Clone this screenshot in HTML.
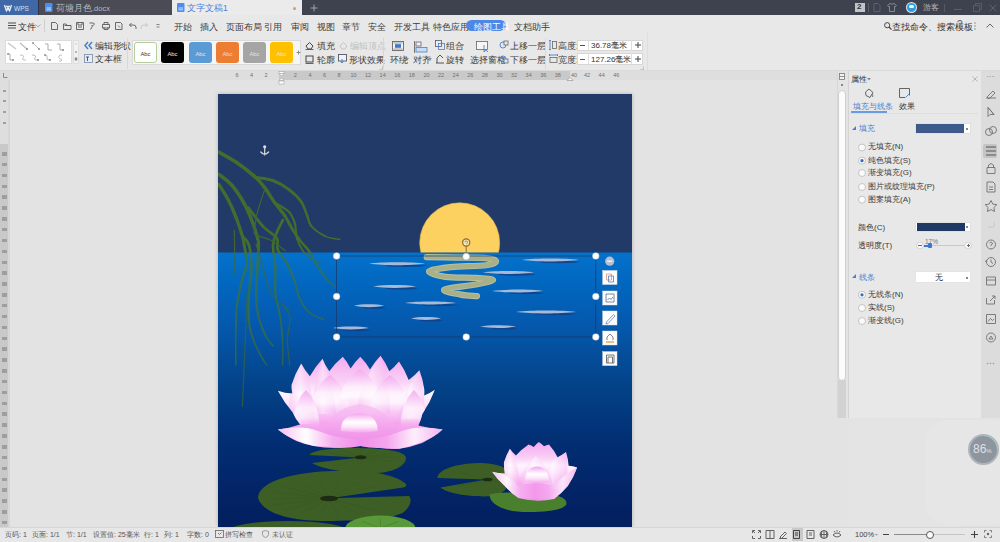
<!DOCTYPE html>
<html><head><meta charset="utf-8">
<style>
*{box-sizing:border-box;margin:0;padding:0}
html,body{width:1000px;height:542px;overflow:hidden;background:#e3e3e3;font-family:"Liberation Sans",sans-serif;font-size:8.5px;color:#333}
.a{position:absolute}
.t{position:absolute;white-space:nowrap;line-height:10px;font-size:8.5px;color:#3c3c3c}
svg{overflow:visible}
#title{left:0;top:0;width:1000px;height:15px;background:#3e424e}
#menu{left:0;top:15px;width:1000px;height:56px;background:#e8e8e8}
#ruler{left:0;top:71px;width:838px;height:9px;background:#dedede}
#vruler{left:0;top:80px;width:10px;height:447px;background:#dedede}
#status{left:0;top:527px;width:1000px;height:15px;background:#e7e7e7;border-top:1px solid #d6d6d6}
#panel{left:848px;top:71px;width:133px;height:456px;background:#e8e8e8;border-left:1px solid #d4d4d4}
#side{left:981px;top:71px;width:19px;height:456px;background:#dcdcdc}
#page{left:218px;top:94px;width:414px;height:433px;overflow:hidden;box-shadow:0 0 4px rgba(0,0,0,.22)}
.ic{position:absolute;overflow:visible}
.sep{position:absolute;width:1px;background:#d2d2d2}
</style></head><body>
<!-- TITLE BAR -->
<div id="title" class="a"></div>
<div class="a" style="left:0;top:0;width:38px;height:15px;background:#4067a6"></div>
<div class="a" style="left:38px;top:0;width:1px;height:15px;background:#2f3240"></div>
<div class="a" style="left:39px;top:0;width:133px;height:15px;background:#4a4b55"></div>
<svg class="ic" style="left:4px;top:4px" width="8" height="8" viewBox="0 0 8 8"><path d="M0.5,1 L2.5,7 L4,3.5 L5.5,7 L7.5,1 M2,2.5 h4" fill="none" stroke="#e4e9f2" stroke-width="1.4" stroke-linejoin="round"/></svg>
<div class="t" style="left:14px;top:3.5px;color:#d9e0ec;font-size:6.5px">WPS</div>
<svg class="ic" style="left:45px;top:3px" width="8" height="9" viewBox="0 0 8 9"><rect x="0" y="0" width="7.5" height="9" rx="1" fill="#4a8ef2"/><path d="M1.5,5 h4.5 M1.5,6.8 h4.5" stroke="#dbe8ff" stroke-width="0.9"/></svg>
<div class="t" style="left:56px;top:3px;color:#b8b9bf;font-size:8.5px">荷塘月色<span style="font-size:7.5px">.docx</span></div>
<div class="a" style="left:172px;top:0;width:130px;height:16px;background:#ebebeb"></div>
<svg class="ic" style="left:177px;top:3px" width="8" height="9" viewBox="0 0 8 9"><rect x="0" y="0" width="7.5" height="9" rx="1" fill="#4a8ef2"/><path d="M1.5,5 h4.5 M1.5,6.8 h4.5" stroke="#dbe8ff" stroke-width="0.9"/></svg>
<div class="t" style="left:187px;top:3px;color:#4a7fd6;font-size:8.5px">文字文稿1</div>
<div class="a" style="left:292.5px;top:6.5px;width:3.5px;height:3.5px;border-radius:2px;background:#d9956e"></div>
<div class="a" style="left:302px;top:0;width:19px;height:15px;background:#3f434f"></div>
<svg class="ic" style="left:310px;top:4px" width="8" height="8" viewBox="0 0 8 8"><path d="M4,0.5 v7 M0.5,4 h7" stroke="#a0a3ab" stroke-width="1"/></svg>
<!-- right side of title -->
<div class="a" style="left:855px;top:3px;width:10px;height:9px;background:#c4c4c8"></div>
<div class="t" style="left:857px;top:2px;color:#333;font-size:8px;font-weight:bold">2</div>
<div class="a" style="left:868px;top:3px;width:1px;height:9px;background:#5a5d68"></div>
<svg class="ic" style="left:873px;top:3px" width="8" height="9" viewBox="0 0 8 9"><path d="M1,0.5 h4 l2,2 v6 h-6z" fill="none" stroke="#5d606b" stroke-width="1"/></svg>
<svg class="ic" style="left:887px;top:3px" width="10" height="9" viewBox="0 0 10 9"><path d="M3,0.5 L0.5,2.5 L2,4 L2.5,3.5 V8.5 H7.5 V3.5 L8,4 L9.5,2.5 L7,0.5 Q5,2 3,0.5z" fill="none" stroke="#8d9099" stroke-width="0.9"/></svg>
<div class="a" style="left:906px;top:2px;width:11px;height:11px;border-radius:6px;background:#dfe6f0"></div>
<div class="a" style="left:907px;top:3px;width:9px;height:9px;border-radius:5px;background:#2f9be6"></div>
<div class="a" style="left:909px;top:5px;width:5px;height:3px;border-radius:2px;background:#fff"></div>
<div class="t" style="left:923px;top:3px;color:#b5b7bd;font-size:8px">游客</div>
<div class="a" style="left:944px;top:4px;width:1px;height:8px;background:#555966"></div>
<div class="a" style="left:954px;top:9px;width:8px;height:1px;background:#5d606b"></div>
<svg class="ic" style="left:973px;top:3px" width="9" height="9" viewBox="0 0 9 9"><path d="M0.5,2.5 h6 v6 h-6z M2.5,2.5 v-2 h6 v6 h-2" fill="none" stroke="#5d606b" stroke-width="0.9"/></svg>
<svg class="ic" style="left:989px;top:4px" width="8" height="8" viewBox="0 0 8 8"><path d="M0.5,0.5 L7.5,7.5 M7.5,0.5 L0.5,7.5" stroke="#5d606b" stroke-width="1"/></svg>
<!-- MENU ROW + RIBBON BG -->
<div id="menu" class="a"></div>
<svg class="ic" style="left:8px;top:22px" width="8" height="7" viewBox="0 0 8 7"><path d="M0,1 h8 M0,3.5 h8 M0,6 h8" stroke="#4a4a4a" stroke-width="1"/></svg>
<div class="t" style="left:18px;top:22px;color:#333">文件</div>
<svg class="ic" style="left:35px;top:24px" width="6" height="4" viewBox="0 0 6 4"><path d="M0.5,0.5 L3,3 L5.5,0.5" fill="none" stroke="#999" stroke-width="0.8"/></svg>
<div class="sep" style="left:44px;top:19px;height:13px;background:#d0d0d0"></div>
<g></g>
<svg class="ic" style="left:51px;top:22px" width="110" height="8" viewBox="0 0 110 8" fill="none" stroke="#5a5a5a" stroke-width="0.9">
<path d="M0.5,0.5 h4 l2,2 v5 h-6z"/>
<path d="M12.5,2 v5.5 h7.5 v-4 h-4 l-1,-1.5z M13.5,3.5 h6"/>
<path d="M25.5,0.5 h7 v7 h-7z M27,0.5 v2.5 h4 v-2.5 M27,5 h4"/>
<path d="M38.5,1 h4 l1,1 l-2,2 l-1,-1 M41.5,4 l-2,3.5"/>
<path d="M51.5,2.5 h7 v3.5 h-7z M53,2.5 v-2 h4 v2 M53,5 v2.5 h4 v-2.5"/>
<path d="M64.5,0.5 h5 l1.5,1.5 v5.5 h-6.5z M67,3.5 l2,2"/>
<path d="M78.5,3 l2,-2 M78.5,3 l2,2 M78.5,3 h4 q2.5,0 2.5,2.5 v1.5"/>
<path d="M96.5,3 l-2,-2 M96.5,3 l-2,2 M96.5,3 h-4 q-2.5,0 -2.5,2.5 v1.5" stroke="#c4c4c4"/>
<path d="M105.5,2.5 h3 M105.5,5 h3" stroke="#777"/>
</svg>
<div class="t" style="left:174px;top:22px">开始</div>
<div class="t" style="left:200px;top:22px">插入</div>
<div class="t" style="left:226px;top:22px">页面布局</div>
<div class="t" style="left:264px;top:22px">引用</div>
<div class="t" style="left:291px;top:22px">审阅</div>
<div class="t" style="left:317px;top:22px">视图</div>
<div class="t" style="left:342px;top:22px">章节</div>
<div class="t" style="left:368px;top:22px">安全</div>
<div class="t" style="left:394px;top:22px">开发工具</div>
<div class="t" style="left:433px;top:22px">特色应用</div>
<div class="a" style="left:466px;top:20px;width:40px;height:11px;border-radius:6px;background:#4d88e6"></div>
<div class="t" style="left:474px;top:22px;color:#fff">绘图工具</div>
<div class="t" style="left:514px;top:22px">文档助手</div>
<svg class="ic" style="left:884px;top:22px" width="8" height="8" viewBox="0 0 8 8"><circle cx="3.2" cy="3.2" r="2.6" fill="none" stroke="#444" stroke-width="1"/><path d="M5,5 L7.5,7.5" stroke="#444" stroke-width="1.1"/></svg>
<div class="t" style="left:892px;top:22px;color:#333">查找命令、搜索模板</div>
<div class="t" style="left:957px;top:20px;color:#666;font-size:10px">?</div>
<svg class="ic" style="left:974px;top:22px" width="2" height="8" viewBox="0 0 2 8"><circle cx="1" cy="1" r="0.7" fill="#777"/><circle cx="1" cy="4" r="0.7" fill="#777"/><circle cx="1" cy="7" r="0.7" fill="#777"/></svg>
<svg class="ic" style="left:986px;top:23px" width="8" height="5" viewBox="0 0 8 5"><path d="M0.5,4.5 L4,1 L7.5,4.5" fill="none" stroke="#666" stroke-width="1"/></svg>
<!-- RIBBON -->
<div class="a" style="left:5px;top:40px;width:67px;height:24px;background:#fff;border:1px solid #dcdcdc"></div>
<svg class="ic" style="left:5px;top:40px" width="67" height="24" viewBox="0 0 67 24" fill="none" stroke-width="0.8">
<path d="M3,3 L11,9" stroke="#c8c8c8" stroke-width="1.4"/>
<path d="M15,3 L22,9" stroke="#c0c0c0" stroke-width="1.4"/><circle cx="22" cy="9" r="1" fill="#8a8a8a" stroke="none"/>
<path d="M28,3 L34,9" stroke="#b0b0b0"/><circle cx="28" cy="3" r="0.9" fill="#8a8a8a" stroke="none"/><circle cx="34" cy="9" r="1" fill="#8a8a8a" stroke="none"/>
<path d="M40,4 h3 v6 h4" stroke="#9a9a9a"/>
<path d="M52,4 h3 v6 h3" stroke="#9a9a9a"/><circle cx="58" cy="10" r="1" fill="#8a8a8a" stroke="none"/>
<path d="M3,14 h2 v6 h3" stroke="#9a9a9a"/><circle cx="3" cy="14" r="0.9" fill="#8a8a8a" stroke="none"/><circle cx="8" cy="20" r="1" fill="#8a8a8a" stroke="none"/>
<path d="M15,15 q5,0 3,3 q-2,2 3,2" stroke="#b0b0b0"/>
<path d="M27,15 q5,0 3,3 q-2,2 3,2" stroke="#aaa"/><circle cx="33" cy="20" r="1" fill="#8a8a8a" stroke="none"/>
<path d="M40,15 q3,0 2,3 q-1,2 3,2" stroke="#aaa"/><circle cx="40" cy="15" r="0.9" fill="#8a8a8a" stroke="none"/><circle cx="45" cy="20" r="1" fill="#8a8a8a" stroke="none"/>
<path d="M57,15 q-4,0 -3,2.5 q1,2 3,2.5 q-1,2 -3,1" stroke="#aab"/>
</svg>
<div class="a" style="left:73px;top:40px;width:6px;height:24px;background:#f2f2f2;border:1px solid #dedede"></div>
<svg class="ic" style="left:73px;top:40px" width="6" height="24" viewBox="0 0 6 24"><path d="M3,3 v2" stroke="#bbb" stroke-width="0.8"/><circle cx="3" cy="12" r="0.8" fill="#666"/><path d="M1.5,19 h3 M3,17 v4" stroke="#555" stroke-width="0.8"/></svg>
<svg class="ic" style="left:84px;top:41px" width="9" height="9" viewBox="0 0 9 9"><path d="M4,1 L1,4.5 L4,8 M8,1 L5,4.5 L8,8" fill="none" stroke="#4a7fc8" stroke-width="1.5"/></svg>
<div class="t" style="left:95px;top:41px">编辑形状</div>
<svg class="ic" style="left:120px;top:44px" width="4" height="3" viewBox="0 0 4 3"><path d="M0,0 h4 l-2,2.5z" fill="#888"/></svg>
<svg class="ic" style="left:84px;top:54px" width="9" height="9" viewBox="0 0 9 9"><rect x="0.5" y="0.5" width="8" height="8" fill="#e4ecf7" stroke="#7a8ca8" stroke-width="0.8"/><path d="M2,3 h3 M3.5,3 v4" stroke="#445" stroke-width="0.9"/></svg>
<div class="t" style="left:95px;top:54px">文本框</div>
<svg class="ic" style="left:116px;top:57px" width="4" height="3" viewBox="0 0 4 3"><path d="M0,0 h4 l-2,2.5z" fill="#888"/></svg>
<div class="sep" style="left:127px;top:38px;height:31px;background:#d8d8d8"></div>
<!-- style gallery -->
<div class="a" style="left:132px;top:40px;width:169px;height:25px;background:#f6f6f6;border:1px solid #dadada"></div>
<div class="a" style="left:134px;top:42px;width:23px;height:21px;border-radius:3px;background:#fff;border:1px solid #b5cf9c"></div>
<div class="a" style="left:161px;top:42px;width:23px;height:21px;border-radius:3px;background:#000"></div>
<div class="a" style="left:189px;top:42px;width:23px;height:21px;border-radius:3px;background:#5b9bd5"></div>
<div class="a" style="left:216px;top:42px;width:23px;height:21px;border-radius:3px;background:#ed7d31"></div>
<div class="a" style="left:243px;top:42px;width:23px;height:21px;border-radius:3px;background:#a5a5a5"></div>
<div class="a" style="left:270px;top:42px;width:23px;height:21px;border-radius:3px;background:#ffc000"></div>
<div class="t" style="left:134px;top:49px;width:23px;text-align:center;font-size:5.8px;color:#333">Abc</div>
<div class="t" style="left:161px;top:49px;width:23px;text-align:center;font-size:5.8px;color:#eee">Abc</div>
<div class="t" style="left:189px;top:49px;width:23px;text-align:center;font-size:5.8px;color:#dbe9f7">Abc</div>
<div class="t" style="left:216px;top:49px;width:23px;text-align:center;font-size:5.8px;color:#fbd9c0">Abc</div>
<div class="t" style="left:243px;top:49px;width:23px;text-align:center;font-size:5.8px;color:#e4e4e4">Abc</div>
<div class="t" style="left:270px;top:49px;width:23px;text-align:center;font-size:5.8px;color:#ffe9a8">Abc</div>
<svg class="ic" style="left:296px;top:50px" width="5" height="5" viewBox="0 0 5 5"><path d="M2.5,0.5 v4 M0.5,2.5 h4" stroke="#777" stroke-width="0.8"/></svg>
<!-- fill / outline -->
<svg class="ic" style="left:305px;top:41px" width="9" height="9" viewBox="0 0 9 9"><path d="M1,5 L4.5,1.5 L8,5 L6,8 H3z" fill="none" stroke="#444" stroke-width="1"/><path d="M0.5,8.5 h8" stroke="#444" stroke-width="0.8"/></svg>
<div class="t" style="left:317px;top:41px">填充</div>
<svg class="ic" style="left:331px;top:44px" width="4" height="3" viewBox="0 0 4 3"><path d="M0,0 h4 l-2,2.5z" fill="#888"/></svg>
<svg class="ic" style="left:339px;top:41px" width="9" height="9" viewBox="0 0 9 9"><path d="M1,5 L4.5,1.5 L8,5 L6,8 H3z" fill="none" stroke="#c4c4c4" stroke-width="1"/></svg>
<div class="t" style="left:350px;top:41px;color:#c0c0c0">编辑顶点</div>
<svg class="ic" style="left:305px;top:55px" width="9" height="9" viewBox="0 0 9 9"><rect x="1" y="1" width="7" height="6" fill="none" stroke="#444" stroke-width="1"/><path d="M0.5,8.5 h8" stroke="#555" stroke-width="0.9"/></svg>
<div class="t" style="left:317px;top:55px">轮廓</div>
<svg class="ic" style="left:331px;top:58px" width="4" height="3" viewBox="0 0 4 3"><path d="M0,0 h4 l-2,2.5z" fill="#888"/></svg>
<svg class="ic" style="left:338px;top:54px" width="10" height="10" viewBox="0 0 10 10"><rect x="0.5" y="0.5" width="8" height="6.5" fill="#eef3fa" stroke="#556" stroke-width="0.9"/><path d="M4,5 v4 M2.5,7.5 l1.5,1.5 l1.5,-1.5" stroke="#4a7fc8" fill="none" stroke-width="0.9"/></svg>
<div class="t" style="left:349px;top:55px">形状效果</div>
<svg class="ic" style="left:376px;top:58px" width="4" height="3" viewBox="0 0 4 3"><path d="M0,0 h4 l-2,2.5z" fill="#888"/></svg>
<div class="sep" style="left:383px;top:38px;height:31px;background:#d6d6d6"></div>
<svg class="ic" style="left:379px;top:66px" width="4" height="4" viewBox="0 0 4 4"><path d="M0.5,3.5 h3 v-3" fill="none" stroke="#aaa" stroke-width="0.6"/></svg>
<!-- wrap / align / group -->
<svg class="ic" style="left:392px;top:41px" width="12" height="10" viewBox="0 0 12 10"><rect x="0.5" y="0.5" width="11" height="9" fill="#f4f4f4" stroke="#666" stroke-width="0.9"/><path d="M1.5,2 h9 M1.5,8 h9" stroke="#888" stroke-width="0.8"/><rect x="3" y="3.2" width="6" height="3.6" fill="#3f78c8"/></svg>
<div class="t" style="left:390px;top:55px">环绕</div>
<svg class="ic" style="left:405px;top:58px" width="4" height="3" viewBox="0 0 4 3"><path d="M0,0 h4 l-2,2.5z" fill="#888"/></svg>
<svg class="ic" style="left:414px;top:41px" width="14" height="12" viewBox="0 0 14 12"><path d="M0.5,0 v12" stroke="#666" stroke-width="0.9"/><rect x="2" y="1" width="5" height="4" fill="#eef" stroke="#666" stroke-width="0.8"/><rect x="2" y="6.5" width="11" height="4.5" fill="#c8dcf5" stroke="#4a7fc8" stroke-width="0.8"/></svg>
<div class="t" style="left:413px;top:55px">对齐</div>
<svg class="ic" style="left:428px;top:58px" width="4" height="3" viewBox="0 0 4 3"><path d="M0,0 h4 l-2,2.5z" fill="#888"/></svg>
<svg class="ic" style="left:435px;top:40px" width="10" height="10" viewBox="0 0 10 10"><rect x="0.5" y="0.5" width="6" height="6" fill="#e6eef9" stroke="#556" stroke-width="0.8"/><rect x="3.5" y="3.5" width="6" height="6" fill="none" stroke="#4a7fc8" stroke-width="0.8"/></svg>
<div class="t" style="left:446px;top:41px">组合</div>
<svg class="ic" style="left:460px;top:44px" width="4" height="3" viewBox="0 0 4 3"><path d="M0,0 h4 l-2,2.5z" fill="#888"/></svg>
<svg class="ic" style="left:435px;top:54px" width="10" height="10" viewBox="0 0 10 10"><path d="M1,9 h8 M2,9 v-5 l3,-3 l3,3" fill="none" stroke="#444" stroke-width="0.9"/></svg>
<div class="t" style="left:446px;top:55px">旋转</div>
<svg class="ic" style="left:460px;top:58px" width="4" height="3" viewBox="0 0 4 3"><path d="M0,0 h4 l-2,2.5z" fill="#888"/></svg>
<svg class="ic" style="left:476px;top:41px" width="13" height="12" viewBox="0 0 13 12"><rect x="0.5" y="0.5" width="11" height="8" fill="#f6f6f6" stroke="#666" stroke-width="0.8"/><path d="M8,4 v7 l2,-2 l2,2" fill="none" stroke="#4a7fc8" stroke-width="0.9"/></svg>
<div class="t" style="left:470px;top:55px">选择窗格</div>
<svg class="ic" style="left:499px;top:40px" width="10" height="10" viewBox="0 0 10 10"><circle cx="4" cy="5" r="3" fill="none" stroke="#4a7fc8" stroke-width="0.9"/><rect x="5" y="1" width="4" height="4" fill="#dde8f7" stroke="#556" stroke-width="0.7"/></svg>
<div class="t" style="left:510px;top:41px">上移一层</div>
<svg class="ic" style="left:537px;top:44px" width="4" height="3" viewBox="0 0 4 3"><path d="M0,0 h4 l-2,2.5z" fill="#888"/></svg>
<svg class="ic" style="left:499px;top:54px" width="10" height="10" viewBox="0 0 10 10"><circle cx="4" cy="5" r="3" fill="none" stroke="#4a7fc8" stroke-width="0.9"/><rect x="5" y="5" width="4" height="4" fill="#dde8f7" stroke="#556" stroke-width="0.7"/></svg>
<div class="t" style="left:510px;top:55px">下移一层</div>
<svg class="ic" style="left:537px;top:58px" width="4" height="3" viewBox="0 0 4 3"><path d="M0,0 h4 l-2,2.5z" fill="#888"/></svg>
<div class="sep" style="left:545px;top:38px;height:31px;background:#dadada"></div>
<!-- size -->
<svg class="ic" style="left:549px;top:40px" width="8" height="10" viewBox="0 0 8 10"><path d="M1,0.5 v9 M0,0.5 h2 M0,9.5 h2" stroke="#4a7fc8" stroke-width="0.9"/><rect x="3.5" y="1.5" width="4" height="7" fill="none" stroke="#666" stroke-width="0.8"/></svg>
<div class="t" style="left:558px;top:41px">高度:</div>
<div class="a" style="left:577px;top:40px;width:66px;height:11px;background:#fff;border:1px solid #d6d6d6"></div>
<div class="a" style="left:588px;top:40px;width:1px;height:11px;background:#dedede"></div>
<div class="a" style="left:631px;top:40px;width:1px;height:11px;background:#dedede"></div>
<div class="a" style="left:580px;top:45px;width:5px;height:1px;background:#555"></div>
<svg class="ic" style="left:635px;top:42px" width="6" height="6" viewBox="0 0 6 6"><path d="M3,0 v6 M0,3 h6" stroke="#444" stroke-width="1"/></svg>
<div class="t" style="left:591px;top:41px;font-size:8px;color:#333">36.78毫米</div>
<svg class="ic" style="left:549px;top:54px" width="9" height="9" viewBox="0 0 9 9"><path d="M0.5,1 h8 M0.5,0 v2 M8.5,0 v2" stroke="#4a7fc8" stroke-width="0.9"/><rect x="1" y="3.5" width="7" height="5" fill="none" stroke="#666" stroke-width="0.8"/></svg>
<div class="t" style="left:558px;top:55px">宽度:</div>
<div class="a" style="left:577px;top:53px;width:66px;height:12px;background:#fff;border:1px solid #d6d6d6"></div>
<div class="a" style="left:588px;top:53px;width:1px;height:12px;background:#dedede"></div>
<div class="a" style="left:631px;top:53px;width:1px;height:12px;background:#dedede"></div>
<div class="a" style="left:580px;top:59px;width:5px;height:1px;background:#555"></div>
<svg class="ic" style="left:635px;top:56px" width="6" height="6" viewBox="0 0 6 6"><path d="M3,0 v6 M0,3 h6" stroke="#444" stroke-width="1"/></svg>
<div class="t" style="left:591px;top:55px;font-size:8px;color:#333">127.26毫米</div>
<svg class="ic" style="left:640px;top:66px" width="4" height="4" viewBox="0 0 4 4"><path d="M0.5,3.5 h3 v-3" fill="none" stroke="#aaa" stroke-width="0.6"/></svg>
<div class="sep" style="left:647px;top:33px;height:37px;background:#dedede"></div>
<div class="a" style="left:0;top:70px;width:1000px;height:1px;background:#dadada"></div>
<!-- RULERS -->
<div id="ruler" class="a"></div>
<div class="a" style="left:279px;top:71px;width:291px;height:9px;background:#c9c9c9"></div>
<svg class="ic" style="left:3px;top:73px" width="5" height="5" viewBox="0 0 5 5"><path d="M0.5,0 v4.5 h4" fill="none" stroke="#777" stroke-width="0.8"/></svg>
<div class="t" style="left:235.4px;top:72px;font-size:5.5px;line-height:7px;color:#707070">6</div>
<div class="t" style="left:250.0px;top:72px;font-size:5.5px;line-height:7px;color:#707070">4</div>
<div class="t" style="left:264.6px;top:72px;font-size:5.5px;line-height:7px;color:#707070">2</div>
<div class="t" style="left:293.8px;top:72px;font-size:5.5px;line-height:7px;color:#707070">2</div>
<div class="t" style="left:308.4px;top:72px;font-size:5.5px;line-height:7px;color:#707070">4</div>
<div class="t" style="left:323.0px;top:72px;font-size:5.5px;line-height:7px;color:#707070">6</div>
<div class="t" style="left:337.6px;top:72px;font-size:5.5px;line-height:7px;color:#707070">8</div>
<div class="t" style="left:350.4px;top:72px;font-size:5.5px;line-height:7px;color:#707070">10</div>
<div class="t" style="left:365.0px;top:72px;font-size:5.5px;line-height:7px;color:#707070">12</div>
<div class="t" style="left:379.6px;top:72px;font-size:5.5px;line-height:7px;color:#707070">14</div>
<div class="t" style="left:394.2px;top:72px;font-size:5.5px;line-height:7px;color:#707070">16</div>
<div class="t" style="left:408.8px;top:72px;font-size:5.5px;line-height:7px;color:#707070">18</div>
<div class="t" style="left:423.4px;top:72px;font-size:5.5px;line-height:7px;color:#707070">20</div>
<div class="t" style="left:438.0px;top:72px;font-size:5.5px;line-height:7px;color:#707070">22</div>
<div class="t" style="left:452.6px;top:72px;font-size:5.5px;line-height:7px;color:#707070">24</div>
<div class="t" style="left:467.2px;top:72px;font-size:5.5px;line-height:7px;color:#707070">26</div>
<div class="t" style="left:481.8px;top:72px;font-size:5.5px;line-height:7px;color:#707070">28</div>
<div class="t" style="left:496.4px;top:72px;font-size:5.5px;line-height:7px;color:#707070">30</div>
<div class="t" style="left:511.0px;top:72px;font-size:5.5px;line-height:7px;color:#707070">32</div>
<div class="t" style="left:525.6px;top:72px;font-size:5.5px;line-height:7px;color:#707070">34</div>
<div class="t" style="left:540.2px;top:72px;font-size:5.5px;line-height:7px;color:#707070">36</div>
<div class="t" style="left:554.8px;top:72px;font-size:5.5px;line-height:7px;color:#707070">38</div>
<div class="t" style="left:584.0px;top:72px;font-size:5.5px;line-height:7px;color:#707070">42</div>
<div class="t" style="left:598.6px;top:72px;font-size:5.5px;line-height:7px;color:#707070">44</div>
<div class="t" style="left:613.2px;top:72px;font-size:5.5px;line-height:7px;color:#707070">46</div>
<svg class="ic" style="left:278px;top:71px" width="7" height="14" viewBox="0 0 7 14"><rect x="1" y="0.5" width="5" height="2" fill="#fff" stroke="#999" stroke-width="0.5"/><path d="M1,2.5 h5 l-2.5,2.5z" fill="#fff" stroke="#999" stroke-width="0.5"/><path d="M1,9.5 l2.5,-2.5 l2.5,2.5z" fill="#fff" stroke="#999" stroke-width="0.5"/><rect x="1" y="10" width="5" height="3" fill="#fff" stroke="#999" stroke-width="0.5"/></svg>
<svg class="ic" style="left:566px;top:75px" width="8" height="6" viewBox="0 0 8 6"><path d="M1,5.5 l3,-3 l3,3z" fill="#fff" stroke="#888" stroke-width="0.6"/></svg>
<div class="t" style="left:571px;top:72px;font-size:5.5px;line-height:7px;color:#707070">40</div>
<div id="vruler" class="a"></div>
<div class="a" style="left:0;top:144px;width:8px;height:383px;background:#c9c9c9"></div>
<div class="a" style="left:8px;top:80px;width:2px;height:447px;background:#d6d6d6"></div>
<div class="a" style="left:3px;top:90px;width:3px;height:1.5px;background:#a0a0a0"></div>
<div class="a" style="left:3px;top:100px;width:3px;height:1.5px;background:#a0a0a0"></div>
<div class="a" style="left:3px;top:111px;width:3px;height:1.5px;background:#a0a0a0"></div>
<div class="a" style="left:3px;top:122px;width:3px;height:1.5px;background:#a0a0a0"></div>
<div class="a" style="left:2px;top:152.0px;width:4.5px;height:3.6px;background:#8f8f8f;opacity:.75"></div>
<div class="a" style="left:2px;top:162.8px;width:4.5px;height:3.6px;background:#8f8f8f;opacity:.75"></div>
<div class="a" style="left:2px;top:173.7px;width:4.5px;height:3.6px;background:#8f8f8f;opacity:.75"></div>
<div class="a" style="left:2px;top:184.5px;width:4.5px;height:3.6px;background:#8f8f8f;opacity:.75"></div>
<div class="a" style="left:2px;top:195.4px;width:4.5px;height:3.6px;background:#8f8f8f;opacity:.75"></div>
<div class="a" style="left:2px;top:206.2px;width:4.5px;height:3.6px;background:#8f8f8f;opacity:.75"></div>
<div class="a" style="left:2px;top:217.1px;width:4.5px;height:3.6px;background:#8f8f8f;opacity:.75"></div>
<div class="a" style="left:2px;top:227.9px;width:4.5px;height:3.6px;background:#8f8f8f;opacity:.75"></div>
<div class="a" style="left:2px;top:238.8px;width:4.5px;height:3.6px;background:#8f8f8f;opacity:.75"></div>
<div class="a" style="left:2px;top:249.6px;width:4.5px;height:3.6px;background:#8f8f8f;opacity:.75"></div>
<div class="a" style="left:2px;top:260.5px;width:4.5px;height:3.6px;background:#8f8f8f;opacity:.75"></div>
<div class="a" style="left:2px;top:271.3px;width:4.5px;height:3.6px;background:#8f8f8f;opacity:.75"></div>
<div class="a" style="left:2px;top:282.2px;width:4.5px;height:3.6px;background:#8f8f8f;opacity:.75"></div>
<div class="a" style="left:2px;top:293.1px;width:4.5px;height:3.6px;background:#8f8f8f;opacity:.75"></div>
<div class="a" style="left:2px;top:303.9px;width:4.5px;height:3.6px;background:#8f8f8f;opacity:.75"></div>
<div class="a" style="left:2px;top:314.8px;width:4.5px;height:3.6px;background:#8f8f8f;opacity:.75"></div>
<div class="a" style="left:2px;top:325.6px;width:4.5px;height:3.6px;background:#8f8f8f;opacity:.75"></div>
<div class="a" style="left:2px;top:336.5px;width:4.5px;height:3.6px;background:#8f8f8f;opacity:.75"></div>
<div class="a" style="left:2px;top:347.3px;width:4.5px;height:3.6px;background:#8f8f8f;opacity:.75"></div>
<div class="a" style="left:2px;top:358.2px;width:4.5px;height:3.6px;background:#8f8f8f;opacity:.75"></div>
<div class="a" style="left:2px;top:369.0px;width:4.5px;height:3.6px;background:#8f8f8f;opacity:.75"></div>
<div class="a" style="left:2px;top:379.9px;width:4.5px;height:3.6px;background:#8f8f8f;opacity:.75"></div>
<div class="a" style="left:2px;top:390.7px;width:4.5px;height:3.6px;background:#8f8f8f;opacity:.75"></div>
<div class="a" style="left:2px;top:401.6px;width:4.5px;height:3.6px;background:#8f8f8f;opacity:.75"></div>
<div class="a" style="left:2px;top:412.4px;width:4.5px;height:3.6px;background:#8f8f8f;opacity:.75"></div>
<div class="a" style="left:2px;top:423.3px;width:4.5px;height:3.6px;background:#8f8f8f;opacity:.75"></div>
<div class="a" style="left:2px;top:434.1px;width:4.5px;height:3.6px;background:#8f8f8f;opacity:.75"></div>
<div class="a" style="left:2px;top:445.0px;width:4.5px;height:3.6px;background:#8f8f8f;opacity:.75"></div>
<div class="a" style="left:2px;top:455.8px;width:4.5px;height:3.6px;background:#8f8f8f;opacity:.75"></div>
<div class="a" style="left:2px;top:466.7px;width:4.5px;height:3.6px;background:#8f8f8f;opacity:.75"></div>
<div class="a" style="left:2px;top:477.5px;width:4.5px;height:3.6px;background:#8f8f8f;opacity:.75"></div>
<div class="a" style="left:2px;top:488.4px;width:4.5px;height:3.6px;background:#8f8f8f;opacity:.75"></div>
<div class="a" style="left:2px;top:499.2px;width:4.5px;height:3.6px;background:#8f8f8f;opacity:.75"></div>
<div class="a" style="left:2px;top:510.1px;width:4.5px;height:3.6px;background:#8f8f8f;opacity:.75"></div>
<div class="a" style="left:2px;top:520.9px;width:4.5px;height:3.6px;background:#8f8f8f;opacity:.75"></div>
<!-- PAGE -->
<div id="page" class="a">
<svg class="a" style="left:0;top:0" width="414" height="433" viewBox="0 0 414 433">
<defs>
<linearGradient id="wat" x1="0" y1="0" x2="0" y2="1">
<stop offset="0" stop-color="#0472cc"/><stop offset="0.12" stop-color="#0266be"/><stop offset="0.29" stop-color="#0556a9"/><stop offset="0.48" stop-color="#034389"/><stop offset="0.7" stop-color="#022d72"/><stop offset="0.94" stop-color="#022162"/><stop offset="1" stop-color="#021f5e"/>
</linearGradient>
<linearGradient id="pv" x1="0" y1="0" x2="0" y2="1">
<stop offset="0" stop-color="#f4a8ef"/><stop offset="0.28" stop-color="#f9d2f6"/><stop offset="0.4" stop-color="#fff4fe"/><stop offset="0.52" stop-color="#fde4fb"/><stop offset="0.72" stop-color="#f5a6ee"/><stop offset="1" stop-color="#f296ea"/>
</linearGradient>
<linearGradient id="ph" x1="0" y1="0" x2="1" y2="0">
<stop offset="0" stop-color="#f3a4ee" stop-opacity="0.7"/><stop offset="0.45" stop-color="#ffffff" stop-opacity="0.8"/><stop offset="1" stop-color="#f3a4ee" stop-opacity="0.7"/>
</linearGradient>
<linearGradient id="pt" x1="0" y1="0" x2="0" y2="1">
<stop offset="0" stop-color="#f4a6ee"/><stop offset="0.45" stop-color="#fdf0fc"/><stop offset="0.7" stop-color="#ffffff" stop-opacity="0.6"/><stop offset="1" stop-color="#f5aaee" stop-opacity="0"/>
</linearGradient>
<linearGradient id="pi" x1="0" y1="0" x2="0" y2="1">
<stop offset="0" stop-color="#f6c2f2"/><stop offset="0.25" stop-color="#f7b8f1"/><stop offset="1" stop-color="#ee86e6"/>
</linearGradient>
<linearGradient id="pb" x1="0" y1="0" x2="1" y2="0">
<stop offset="0" stop-color="#f6bdf2"/><stop offset="0.17" stop-color="#ffffff"/><stop offset="0.33" stop-color="#f5b0ef"/><stop offset="0.5" stop-color="#f290ea"/><stop offset="0.66" stop-color="#f4a6ed"/><stop offset="0.83" stop-color="#fdeefc"/><stop offset="1" stop-color="#f4b2ef"/>
</linearGradient>
<linearGradient id="bud" x1="0" y1="0" x2="0" y2="1">
<stop offset="0" stop-color="#f5a6ee"/><stop offset="0.45" stop-color="#ffffff"/><stop offset="0.7" stop-color="#fde6fb"/><stop offset="1" stop-color="#f5a8ee"/>
</linearGradient>
<clipPath id="sky"><rect x="0" y="0" width="414" height="158.5"/></clipPath>
</defs>
<rect x="0" y="0" width="414" height="159" fill="#213a67"/>
<rect x="0" y="158.5" width="414" height="275" fill="url(#wat)"/>
<circle cx="241.7" cy="148.8" r="40" fill="#fcd160" stroke="#e3b455" stroke-width="0.6" clip-path="url(#sky)"/>

<g fill="none" stroke="#46732a" stroke-linecap="round" stroke-linejoin="round" opacity="0.9">
<path stroke-width="3.69" d="M1.0,58.1 C3.9,59.8 12.4,64.2 18.3,68.2"/>
<path stroke-width="3.64" d="M18.3,68.2 C24.2,72.2 31.8,78.2 36.5,82.4"/>
<path stroke-width="3.55" d="M36.5,82.4 C41.2,86.6 43.3,89.2 46.7,93.6"/>
<path stroke-width="3.42" d="M46.7,93.6 C50.1,98.0 53.4,104.1 56.8,108.8"/>
<path stroke-width="3.26" d="M56.8,108.8 C60.2,113.5 64.0,117.4 67.0,122.0"/>
<path stroke-width="3.06" d="M67.0,122.0 C70.0,126.6 72.3,131.9 75.0,136.2"/>
<path stroke-width="2.84" d="M75.0,136.2 C77.7,140.5 80.5,144.5 83.2,148.0"/>
<path stroke-width="2.59" d="M83.2,148.0 C85.9,151.5 88.5,153.3 91.0,157.0"/>
<path stroke-width="2.30" d="M91.0,157.0 C93.5,160.7 95.0,165.2 98.2,170.2"/>
<path stroke-width="1.99" d="M98.2,170.2 C101.4,175.2 107.0,183.4 110.2,187.0"/>
<path stroke-width="1.66" d="M110.2,187.0 C113.4,190.6 116.2,191.0 117.4,191.8"/>
<path stroke-width="3.08" d="M38.6,83.5 C41.3,84.0 49.4,84.5 54.8,86.5"/>
<path stroke-width="2.98" d="M54.8,86.5 C60.2,88.5 66.3,92.0 71.0,95.6"/>
<path stroke-width="2.81" d="M71.0,95.6 C75.7,99.1 80.2,103.4 83.2,107.8"/>
<path stroke-width="2.57" d="M83.2,107.8 C86.2,112.2 87.6,118.0 89.3,122.0"/>
<path stroke-width="2.26" d="M89.3,122.0 C91.0,126.0 90.3,128.7 93.3,132.1"/>
<path stroke-width="1.89" d="M93.3,132.1 C96.3,135.5 102.8,140.1 107.5,142.3"/>
<path stroke-width="1.47" d="M107.5,142.3 C112.2,144.5 119.3,144.8 121.7,145.3"/>
<path stroke-width="3.69" d="M1.0,80.4 C3.2,82.3 10.0,86.7 14.2,91.6"/>
<path stroke-width="3.63" d="M14.2,91.6 C18.4,96.5 23.0,103.7 26.4,109.8"/>
<path stroke-width="3.52" d="M26.4,109.8 C29.8,115.9 32.3,122.3 34.5,128.1"/>
<path stroke-width="3.36" d="M34.5,128.1 C36.7,133.8 38.6,140.5 39.6,144.3"/>
<path stroke-width="3.17" d="M39.6,144.3 C40.6,148.1 40.6,145.9 40.6,151.0"/>
<path stroke-width="2.94" d="M40.6,151.0 C40.6,156.1 39.8,166.2 39.4,175.0"/>
<path stroke-width="2.68" d="M39.4,175.0 C39.0,183.8 38.0,195.8 38.2,203.8"/>
<path stroke-width="2.38" d="M38.2,203.8 C38.4,211.8 39.0,216.6 40.6,223.0"/>
<path stroke-width="2.04" d="M40.6,223.0 C42.2,229.4 45.4,237.4 47.8,242.2"/>
<path stroke-width="1.68" d="M47.8,242.2 C50.2,247.0 53.8,250.2 55.0,251.8"/>
<path stroke-width="3.49" d="M1.0,90.6 C2.5,93.1 7.3,100.2 10.2,105.8"/>
<path stroke-width="3.42" d="M10.2,105.8 C13.1,111.4 15.9,117.9 18.3,124.0"/>
<path stroke-width="3.29" d="M18.3,124.0 C20.7,130.1 23.1,137.8 24.4,142.3"/>
<path stroke-width="3.12" d="M24.4,142.3 C25.7,146.8 25.5,146.3 26.2,151.0"/>
<path stroke-width="2.90" d="M26.2,151.0 C26.9,155.7 29.0,164.2 28.6,170.2"/>
<path stroke-width="2.63" d="M28.6,170.2 C28.2,176.2 25.4,180.2 23.8,187.0"/>
<path stroke-width="2.33" d="M23.8,187.0 C22.2,193.8 20.0,203.0 19.0,211.0"/>
<path stroke-width="1.99" d="M19.0,211.0 C18.0,219.0 18.0,225.0 17.8,235.0"/>
<path stroke-width="1.61" d="M17.8,235.0 C17.6,245.0 17.8,265.0 17.8,271.0"/>
<path stroke-width="2.38" d="M56.8,108.8 C59.2,110.3 67.6,114.5 71.0,118.0"/>
<path stroke-width="2.28" d="M71.0,118.0 C74.4,121.5 75.7,125.5 77.0,130.0"/>
<path stroke-width="2.10" d="M77.0,130.0 C78.3,134.5 77.7,140.5 79.0,145.0"/>
<path stroke-width="1.85" d="M79.0,145.0 C80.3,149.5 83.0,154.0 85.0,157.0"/>
<path stroke-width="1.54" d="M85.0,157.0 C87.0,160.0 88.0,160.8 91.0,163.0"/>
<path stroke-width="1.17" d="M91.0,163.0 C94.0,165.2 101.0,169.0 103.0,170.2"/>
<path stroke-width="2.89" d="M30.5,113.9 C32.9,116.9 40.0,127.0 44.7,132.1"/>
<path stroke-width="2.81" d="M44.7,132.1 C49.4,137.2 56.4,140.4 58.9,144.3"/>
<path stroke-width="2.69" d="M58.9,144.3 C61.4,148.2 58.0,151.5 59.8,155.8"/>
<path stroke-width="2.51" d="M59.8,155.8 C61.5,160.1 66.6,165.0 69.4,170.2"/>
<path stroke-width="2.28" d="M69.4,170.2 C72.2,175.4 74.6,181.4 76.6,187.0"/>
<path stroke-width="2.01" d="M76.6,187.0 C78.6,192.6 79.0,198.6 81.4,203.8"/>
<path stroke-width="1.70" d="M81.4,203.8 C83.8,209.0 87.0,214.6 91.0,218.2"/>
<path stroke-width="1.35" d="M91.0,218.2 C95.0,221.8 103.0,224.2 105.4,225.4"/>
<path stroke-width="2.88" d="M24.4,142.3 C25.5,143.8 29.5,145.6 31.0,151.0"/>
<path stroke-width="2.79" d="M31.0,151.0 C32.5,156.4 33.4,167.0 33.4,175.0"/>
<path stroke-width="2.63" d="M33.4,175.0 C33.4,183.0 31.4,190.2 31.0,199.0"/>
<path stroke-width="2.40" d="M31.0,199.0 C30.6,207.8 30.2,219.8 31.0,227.8"/>
<path stroke-width="2.11" d="M31.0,227.8 C31.8,235.8 33.4,240.6 35.8,247.0"/>
<path stroke-width="1.77" d="M35.8,247.0 C38.2,253.4 43.2,262.2 45.4,266.2"/>
<path stroke-width="1.38" d="M45.4,266.2 C47.6,270.2 48.4,270.2 49.0,271.0"/>
<path stroke-width="2.88" d="M64.9,126.0 C63.9,128.0 60.5,134.0 58.9,138.2"/>
<path stroke-width="2.79" d="M58.9,138.2 C57.2,142.4 55.2,144.9 55.0,151.0"/>
<path stroke-width="2.63" d="M55.0,151.0 C54.8,157.1 57.0,167.0 57.4,175.0"/>
<path stroke-width="2.40" d="M57.4,175.0 C57.8,183.0 56.6,191.0 57.4,199.0"/>
<path stroke-width="2.11" d="M57.4,199.0 C58.2,207.0 61.0,215.0 62.2,223.0"/>
<path stroke-width="1.77" d="M62.2,223.0 C63.4,231.0 64.2,239.0 64.6,247.0"/>
<path stroke-width="1.38" d="M64.6,247.0 C65.0,255.0 64.6,267.0 64.6,271.0"/>
<path stroke-width="1.3" stroke="#41692f" d="M46.7,95.6 C46.0,97.6 44.0,103.4 42.6,107.8 C41.2,112.2 39.7,116.6 38.6,122.0 C37.5,127.4 36.4,137.0 36.0,140.0"/>
<path stroke-width="1.3" stroke="#41692f" d="M16.3,136.2 C16.4,140.2 16.6,152.7 16.6,160.0 C16.7,167.3 16.6,176.7 16.6,180.0"/>
<path stroke-width="1.3" stroke="#41692f" d="M38.6,141.3 C41.0,142.1 48.1,143.8 52.8,146.3 C57.5,148.8 64.6,154.8 67.0,156.5"/>
<path stroke-width="1.3" stroke="#41692f" d="M38.0,150.0 C39.2,154.2 43.0,166.8 45.4,175.0 C47.8,183.2 49.4,193.0 52.6,199.0 C55.8,205.0 61.4,208.2 64.6,211.0 C67.8,213.8 70.6,215.0 71.8,215.8"/>
<path stroke-width="1.3" stroke="#41692f" d="M64.6,211.0 C65.8,213.0 71.0,217.0 71.8,223.0 C72.6,229.0 69.4,239.0 69.4,247.0 C69.4,255.0 71.4,267.0 71.8,271.0"/>
<path stroke-width="1.3" stroke="#41692f" d="M29.0,200.0 C28.8,206.7 28.0,227.5 27.5,240.0 C27.0,252.5 26.5,263.0 26.0,275.0 C25.5,287.0 24.7,305.8 24.4,312.0"/>
</g>
<rect x="0" y="159" width="150" height="274" fill="url(#wat)" opacity="0.3"/>
<path d="M208.7,163.1 C213.5,163.2 227.7,163.4 237.6,163.6 C247.5,163.8 261.2,163.5 268.0,164.1 C274.8,164.7 278.1,166.0 278.1,167.2 C278.1,168.4 275.6,170.2 268.0,171.2 C260.4,172.2 242.0,172.2 232.5,173.2 C223.0,174.2 212.0,175.7 211.2,177.3 C210.3,178.9 219.6,181.8 227.4,182.9 C235.2,184.0 249.9,183.4 257.9,183.9 C265.8,184.4 275.1,184.8 275.1,185.9 C275.1,187.0 266.0,188.9 257.9,190.5 C249.8,192.1 228.9,193.9 226.4,195.6 C223.9,197.3 237.2,199.5 242.6,200.6 C248.0,201.7 256.2,201.8 258.9,202.1" fill="none" stroke="#b5c2a2" stroke-width="6.2" stroke-linecap="round" stroke-linejoin="round"/>
<path d="M208.7,163.1 C213.5,163.2 227.7,163.4 237.6,163.6 C247.5,163.8 261.2,163.5 268.0,164.1 C274.8,164.7 278.1,166.0 278.1,167.2 C278.1,168.4 275.6,170.2 268.0,171.2 C260.4,172.2 242.0,172.2 232.5,173.2 C223.0,174.2 212.0,175.7 211.2,177.3 C210.3,178.9 219.6,181.8 227.4,182.9 C235.2,184.0 249.9,183.4 257.9,183.9 C265.8,184.4 275.1,184.8 275.1,185.9 C275.1,187.0 266.0,188.9 257.9,190.5 C249.8,192.1 228.9,193.9 226.4,195.6 C223.9,197.3 237.2,199.5 242.6,200.6 C248.0,201.7 256.2,201.8 258.9,202.1" fill="none" stroke="#a9af87" stroke-width="4.4" stroke-linecap="round" stroke-linejoin="round"/>
<path d="M166.1,171.7 C176.8,170.3 198.3,170.3 209.0,171.7 C198.3,173.3 176.8,173.3 166.1,171.7Z" fill="#143f88" opacity="0.9"/>
<path d="M151.0,169.7 C165.0,167.8 193.0,167.8 207.0,169.7 C193.0,171.6 165.0,171.6 151.0,169.7Z" fill="#a3bad8"/>
<path d="M319.4,168.0 C330.3,166.6 352.1,166.6 363.0,168.0 C352.1,169.6 330.3,169.6 319.4,168.0Z" fill="#143f88" opacity="0.9"/>
<path d="M304.0,166.0 C318.2,164.1 346.8,164.1 361.0,166.0 C346.8,167.9 318.2,167.9 304.0,166.0Z" fill="#a3bad8"/>
<path d="M278.8,180.5 C288.6,179.1 308.2,179.1 318.0,180.5 C308.2,182.1 288.6,182.1 278.8,180.5Z" fill="#143f88" opacity="0.9"/>
<path d="M265.0,178.5 C277.8,176.6 303.2,176.6 316.0,178.5 C303.2,180.4 277.8,180.4 265.0,178.5Z" fill="#a3bad8"/>
<path d="M166.6,194.5 C175.0,193.1 191.7,193.1 200.0,194.5 C191.7,196.1 175.0,196.1 166.6,194.5Z" fill="#143f88" opacity="0.9"/>
<path d="M155.0,192.5 C165.8,190.6 187.2,190.6 198.0,192.5 C187.2,194.4 165.8,194.4 155.0,192.5Z" fill="#a3bad8"/>
<path d="M287.8,199.0 C297.6,197.6 317.2,197.6 327.0,199.0 C317.2,200.6 297.6,200.6 287.8,199.0Z" fill="#143f88" opacity="0.9"/>
<path d="M274.0,197.0 C286.8,195.1 312.2,195.1 325.0,197.0 C312.2,198.9 286.8,198.9 274.0,197.0Z" fill="#a3bad8"/>
<path d="M144.1,213.8 C150.1,212.4 162.0,212.4 168.0,213.8 C162.0,215.4 150.1,215.4 144.1,213.8Z" fill="#143f88" opacity="0.9"/>
<path d="M136.0,211.8 C143.5,209.9 158.5,209.9 166.0,211.8 C158.5,213.7 143.5,213.7 136.0,211.8Z" fill="#a3bad8"/>
<path d="M200.8,211.0 C210.6,209.6 230.2,209.6 240.0,211.0 C230.2,212.6 210.6,212.6 200.8,211.0Z" fill="#143f88" opacity="0.9"/>
<path d="M187.0,209.0 C199.8,207.1 225.2,207.1 238.0,209.0 C225.2,210.9 199.8,210.9 187.0,209.0Z" fill="#a3bad8"/>
<path d="M314.2,220.0 C325.6,218.6 348.6,218.6 360.0,220.0 C348.6,221.6 325.6,221.6 314.2,220.0Z" fill="#143f88" opacity="0.9"/>
<path d="M298.0,218.0 C313.0,216.1 343.0,216.1 358.0,218.0 C343.0,219.9 313.0,219.9 298.0,218.0Z" fill="#a3bad8"/>
<path d="M201.1,226.5 C207.1,225.1 219.0,225.1 225.0,226.5 C219.0,228.1 207.1,228.1 201.1,226.5Z" fill="#143f88" opacity="0.9"/>
<path d="M193.0,224.5 C200.5,222.6 215.5,222.6 223.0,224.5 C215.5,226.4 200.5,226.4 193.0,224.5Z" fill="#a3bad8"/>
<path d="M124.7,236.0 C131.8,234.6 145.9,234.6 153.0,236.0 C145.9,237.6 131.8,237.6 124.7,236.0Z" fill="#143f88" opacity="0.9"/>
<path d="M115.0,234.0 C124.0,232.1 142.0,232.1 151.0,234.0 C142.0,235.9 124.0,235.9 115.0,234.0Z" fill="#a3bad8"/>
<path d="M271.7,234.6 C278.8,233.2 292.9,233.2 300.0,234.6 C292.9,236.2 278.8,236.2 271.7,234.6Z" fill="#143f88" opacity="0.9"/>
<path d="M262.0,232.6 C271.0,230.7 289.0,230.7 298.0,232.6 C289.0,234.5 271.0,234.5 262.0,232.6Z" fill="#a3bad8"/>
<g fill="none" stroke="#dcdcdc" stroke-width="1.2" stroke-linecap="round"><path d="M46.7,53.5 v7.5 M42.8,58 q3.9,4.5 7.8,0"/><circle cx="46.7" cy="52.8" r="1" fill="#dcdcdc"/></g>
<g fill="#3d5f25">
<path d="M91.5,361 C95,356 115,354 135,354 C165,354 188,357 188,364 C188,372 175,378 160,379 C130,380 104,375 94,369 L142.6,363.6 Z"/>
<path d="M40,404 C40,392 60,381 103,377.5 C140,375 175,378 188,390 C189,391 188,393 185,393.5 L112,404.3 L191,402 C194,405 193,412 186,418 C175,425 150,426 115,427 C75,428 45,420 40,404 Z"/>
<ellipse cx="70" cy="437" rx="60" ry="10"/>
<path d="M219.5,384 C220,376 235,370 260,369 C280,369 292,374 292,382 C292,394 285,401 271.5,402.3 C250,403 228,399 222.5,393.5 L268.5,385.6 Z"/>

</g>
<path fill="#4a7f2e" d="M271.5,400.6 C280,398 300,398 330,400 C345,402 350,406 348,411 C344,416 330,418 310,418 C288,418 272,412 271.5,400.6 Z"/>
<ellipse cx="162.4" cy="434" rx="35" ry="12.5" fill="#5a993a"/>
<g stroke="#35561e" stroke-width="0.5" opacity="0.55" fill="none">
<path d="M111.0,404.5 L156.6,416.5"/>
<path d="M111.0,404.5 L140.8,420.7"/>
<path d="M111.0,404.5 L121.3,422.9"/>
<path d="M111.0,404.5 L100.7,422.9"/>
<path d="M111.0,404.5 L81.3,420.7"/>
<path d="M111.0,404.5 L65.4,416.5"/>
<path d="M111.0,404.5 L55.1,410.9"/>
<path d="M111.0,404.5 L51.5,404.5"/>
<path d="M111.0,404.5 L55.1,398.1"/>
<path d="M111.0,404.5 L65.4,392.5"/>
<path d="M111.0,404.5 L81.2,388.3"/>
<path d="M111.0,404.5 L100.7,386.1"/>
<path d="M111.0,404.5 L121.3,386.1"/>
<path d="M111.0,404.5 L140.8,388.3"/>
<path d="M111.0,404.5 L156.6,392.5"/>
<path d="M142.6,363.4 L180.0,363.4"/>
<path d="M142.6,363.4 L175.0,367.6"/>
<path d="M142.6,363.4 L161.3,370.8"/>
<path d="M142.6,363.4 L142.6,371.9"/>
<path d="M142.6,363.4 L123.9,370.8"/>
<path d="M142.6,363.4 L110.2,367.6"/>
<path d="M142.6,363.4 L110.2,359.1"/>
<path d="M142.6,363.4 L123.9,356.0"/>
<path d="M142.6,363.4 L142.6,354.9"/>
<path d="M142.6,363.4 L161.3,356.0"/>
<path d="M142.6,363.4 L175.0,359.1"/>
<path d="M269.0,385.5 L303.0,385.5"/>
<path d="M269.0,385.5 L296.5,392.5"/>
<path d="M269.0,385.5 L279.5,396.8"/>
<path d="M269.0,385.5 L258.5,396.8"/>
<path d="M269.0,385.5 L241.5,392.5"/>
<path d="M269.0,385.5 L241.5,378.5"/>
<path d="M269.0,385.5 L258.5,374.2"/>
<path d="M269.0,385.5 L279.5,374.2"/>
<path d="M269.0,385.5 L296.5,378.5"/>
<path d="M162.4,434.0 L180.4,440.6"/>
<path d="M162.4,434.0 L162.4,443.4"/>
<path d="M162.4,434.0 L144.4,440.6"/>
<path d="M162.4,434.0 L136.9,434.0"/>
<path d="M162.4,434.0 L144.4,427.4"/>
<path d="M162.4,434.0 L162.4,424.6"/>
<path d="M162.4,434.0 L180.4,427.4"/>
</g>
<g fill="#1c2b12"><ellipse cx="142.6" cy="363.3" rx="6" ry="2"/><ellipse cx="111" cy="404.5" rx="9" ry="2.8"/><ellipse cx="269.5" cy="385.5" rx="5" ry="1.8"/></g>
<clipPath id="cl1"><path d="M59.9,296.7 Q67.0,299.0 74.4,299.6 Q73.4,295.3 73.5,290.9 Q77.1,279.7 83.2,269.6 Q86.8,276.4 91.9,282.2 Q97.2,272.7 104.5,264.7 Q107.1,271.4 111.3,277.3 Q117.2,269.2 124.8,262.8 Q129.4,268.1 132.6,274.4 Q136.8,268.0 142.3,262.8 Q147.9,268.5 152.0,275.4 Q156.5,268.0 162.6,261.8 Q167.9,269.0 171.3,277.3 Q176.7,273.0 181.0,267.6 Q187.0,276.2 190.7,286.0 Q196.6,281.8 201.4,276.3 Q204.9,285.3 206.2,294.8 Q206.6,298.1 206.2,301.5 Q211.9,299.2 216.9,295.7 Q212.1,308.6 204.3,320.0 Q203.0,326.0 200.4,331.6 Q212.3,335.0 224.6,335.5 Q215.3,343.5 204.3,349.0 Q193.0,353.3 181.0,354.8 Q171.3,355.5 161.7,353.9 Q151.9,354.1 142.3,352.0 Q131.8,354.2 121.0,353.9 Q108.3,354.5 95.8,352.0 Q86.8,350.6 78.3,347.0 Q68.4,342.4 59.9,335.5 Q71.3,334.4 82.2,330.6 Q77.5,324.8 74.4,318.0 Q65.9,308.2 59.9,296.7Z"/></clipPath>
<path fill="url(#pv)" d="M59.9,296.7 Q67.0,299.0 74.4,299.6 Q73.4,295.3 73.5,290.9 Q77.1,279.7 83.2,269.6 Q86.8,276.4 91.9,282.2 Q97.2,272.7 104.5,264.7 Q107.1,271.4 111.3,277.3 Q117.2,269.2 124.8,262.8 Q129.4,268.1 132.6,274.4 Q136.8,268.0 142.3,262.8 Q147.9,268.5 152.0,275.4 Q156.5,268.0 162.6,261.8 Q167.9,269.0 171.3,277.3 Q176.7,273.0 181.0,267.6 Q187.0,276.2 190.7,286.0 Q196.6,281.8 201.4,276.3 Q204.9,285.3 206.2,294.8 Q206.6,298.1 206.2,301.5 Q211.9,299.2 216.9,295.7 Q212.1,308.6 204.3,320.0 Q203.0,326.0 200.4,331.6 Q212.3,335.0 224.6,335.5 Q215.3,343.5 204.3,349.0 Q193.0,353.3 181.0,354.8 Q171.3,355.5 161.7,353.9 Q151.9,354.1 142.3,352.0 Q131.8,354.2 121.0,353.9 Q108.3,354.5 95.8,352.0 Q86.8,350.6 78.3,347.0 Q68.4,342.4 59.9,335.5 Q71.3,334.4 82.2,330.6 Q77.5,324.8 74.4,318.0 Q65.9,308.2 59.9,296.7Z"/>
<g clip-path="url(#cl1)">
<path fill="url(#ph)" opacity="0.5" d="M70,330 Q70,290 83.2,269.6 Q96,292 96,330 Z"/>
<path fill="url(#ph)" opacity="0.5" d="M94,320 Q96,285 104.5,264.7 Q116,290 118,320 Z"/>
<path fill="url(#ph)" opacity="0.5" d="M138,320 Q142,288 162.6,261.8 Q172,290 172,320 Z"/>
<path fill="url(#ph)" opacity="0.5" d="M180,325 Q186,295 201.4,276.3 Q208,300 206,325 Z"/>
<path fill="url(#pt)" opacity="0.85" d="M92,321 Q94.0,293 112,281 Q130.0,293 132,321 Z"/>
<path fill="url(#pt)" opacity="0.85" d="M120,315 Q122.2,287 142,275 Q161.8,287 164,315 Z"/>
<path fill="url(#pt)" opacity="0.85" d="M152,321 Q154.0,293 172,281 Q190.0,293 192,321 Z"/>
<path fill="url(#pt)" opacity="0.85" d="M74,336 Q75.4,308 88,296 Q100.6,308 102,336 Z"/>
<path fill="url(#pt)" opacity="0.85" d="M182,336 Q183.4,308 196,296 Q208.6,308 210,336 Z"/>
<path fill="url(#pi)" opacity="0.85" d="M102,352 C102,328 120,313 142,310 C164,313 182,328 182,352 Z"/>
</g>
<path fill="url(#pb)" d="M59.9,335.5 Q85,331 100,337 Q120,345 142,345 Q164,345 184,337 Q200,331 224.6,335.5 Q212,348 181,354.8 Q162,354 142.3,352 Q121,354 95.8,352 Q72,346 59.9,335.5 Z"/>
<path fill="url(#bud)" d="M122.9,337 C122.5,325 131,319.5 141.3,319.5 C151.6,319.5 160,325 159.7,337 Q141,340 122.9,337 Z"/>
<clipPath id="cl2"><path d="M274.1,377.7 Q280.3,379.3 286.8,379.4 Q285.7,373.9 286.0,368.3 Q288.1,361.1 291.9,354.7 Q294.5,358.5 297.9,361.5 Q303.6,355.2 310.6,350.5 Q313.3,351.4 315.7,353.0 Q317.9,350.1 320.8,347.9 Q323.7,349.7 326.0,352.2 Q328.4,351.1 331.0,350.5 Q336.1,356.3 339.6,363.2 Q344.1,361.2 348.0,358.1 Q350.1,364.7 350.6,371.7 Q355.0,372.0 359.1,373.4 Q355.6,383.3 349.8,392.1 Q343.7,399.3 336.1,404.9 Q326.9,406.9 317.4,406.6 Q308.7,406.3 300.4,404.0 Q292.9,398.9 286.8,392.1 Q279.6,385.7 274.1,377.7Z"/></clipPath>
<path fill="url(#pv)" d="M274.1,377.7 Q280.3,379.3 286.8,379.4 Q285.7,373.9 286.0,368.3 Q288.1,361.1 291.9,354.7 Q294.5,358.5 297.9,361.5 Q303.6,355.2 310.6,350.5 Q313.3,351.4 315.7,353.0 Q317.9,350.1 320.8,347.9 Q323.7,349.7 326.0,352.2 Q328.4,351.1 331.0,350.5 Q336.1,356.3 339.6,363.2 Q344.1,361.2 348.0,358.1 Q350.1,364.7 350.6,371.7 Q355.0,372.0 359.1,373.4 Q355.6,383.3 349.8,392.1 Q343.7,399.3 336.1,404.9 Q326.9,406.9 317.4,406.6 Q308.7,406.3 300.4,404.0 Q292.9,398.9 286.8,392.1 Q279.6,385.7 274.1,377.7Z"/>
<g clip-path="url(#cl2)">
<path fill="url(#ph)" opacity="0.55" d="M284,390 Q282,368 291.9,354.7 Q302,372 302,395 Z"/>
<path fill="url(#ph)" opacity="0.55" d="M322,395 Q324,370 348,358.1 Q352,378 346,395 Z"/>
<path fill="url(#ph)" opacity="0.55" d="M300,404 Q298,378 318,362 Q336,378 336,404 Z"/>
<path fill="url(#pb)" opacity="0.85" d="M274.1,377.7 Q292,380 300,392 Q318,386 336,392 Q346,380 359.1,373.4 Q356,392 336.1,404.9 Q317.4,407 300.4,404 Q280,392 274.1,377.7 Z"/>
</g>
<path fill="url(#bud)" d="M307.2,388 C307,378 312,372.6 319.1,372.6 C326,372.6 331.2,378 331,388 Q319,390 307.2,388 Z"/>
<!-- selection -->
<rect x="118.6" y="162" width="259.2" height="81" fill="none" stroke="#1b3766" stroke-width="0.7"/>
<line x1="248.2" y1="152" x2="248.2" y2="162" stroke="#6a5a3a" stroke-width="0.8"/>
<circle cx="248.2" cy="148.5" r="3.6" fill="#f7e8b8" stroke="#8a6a2e" stroke-width="1.2"/>
<path d="M246.8,148.3 a1.4,1.4 0 1 1 1.4,1.4" fill="none" stroke="#6a5a3a" stroke-width="0.6"/>
<g fill="#fff" stroke="#b8c0cc" stroke-width="0.5">
<circle cx="118.6" cy="162" r="3.3"/><circle cx="248.2" cy="162.5" r="3.3"/><circle cx="377.8" cy="162" r="3.3"/>
<circle cx="118.6" cy="202.5" r="3.3"/><circle cx="377.8" cy="202.5" r="3.3"/>
<circle cx="118.6" cy="243" r="3.3"/><circle cx="248.2" cy="243" r="3.3"/><circle cx="377.8" cy="243" r="3.3"/>
</g>
<!-- mini toolbar -->
<circle cx="391.7" cy="167.2" r="4.6" fill="#b6bfcf"/><line x1="389.2" y1="167.2" x2="394.2" y2="167.2" stroke="#fff" stroke-width="1.2"/>
<g fill="#fdfdfd" stroke="#d3dae4" stroke-width="0.5">
<rect x="384.7" y="176.5" width="14.3" height="14"/><rect x="384.7" y="197" width="14.3" height="14"/><rect x="384.7" y="217" width="14.3" height="14"/><rect x="384.7" y="237" width="14.3" height="14"/><rect x="384.7" y="257.6" width="14.3" height="14"/>
</g>
<g fill="none" stroke-width="0.9">
<path d="M388.5,180 h5 v6 h-5z" stroke="#e0a080"/><path d="M390.5,182 h5 v6 h-5z" stroke="#6a86c0"/>
<path d="M388,200 h8 v8 h-8z M389.5,206 l2,-2 l1.5,1.5 l2,-2.5" stroke="#6b7d99"/>
<path d="M388.5,228 l7,-7.5 l1.5,1.5 l-7,7.5 l-2,0.5z" stroke="#7a8fc0"/>
<path d="M388,248 h8" stroke="#d8a850" stroke-width="1.4"/><path d="M389,246 v-3 l3,-3 l3,3 v3" stroke="#777"/>
<path d="M388.5,261 h7.5 v8 h-7.5z M390,269 v-6 h4.5 v6" stroke="#666"/>
</g>
</svg>

</div>
<!-- SCROLLBAR -->
<div class="a" style="left:837px;top:71px;width:10px;height:456px;background:#e4e4e4;border-left:1px solid #d8d8d8"></div>
<svg class="ic" style="left:839px;top:73px" width="6" height="7" viewBox="0 0 6 7"><rect x="0.5" y="0.5" width="5" height="6" fill="#f2f2f2" stroke="#777" stroke-width="0.8"/><path d="M0.5,3.5 h5" stroke="#777" stroke-width="0.8"/></svg>
<div class="a" style="left:841px;top:84px;width:2px;height:2px;background:#888"></div>
<div class="a" style="left:838px;top:380px;width:8px;height:38px;background:#d2d2d2"></div>
<div class="a" style="left:838px;top:90px;width:8px;height:291px;background:#fbfbfb;border:1px solid #cfcfcf;border-radius:4px"></div>
<!-- PANEL -->
<div id="panel" class="a"></div>
<div class="t" style="left:851px;top:75px;color:#333;font-size:8px">属性</div>
<svg class="ic" style="left:867px;top:78px" width="4" height="3" viewBox="0 0 4 3"><path d="M0,0 h4 l-2,2.5z" fill="#888"/></svg>
<svg class="ic" style="left:972px;top:76px" width="6" height="6" viewBox="0 0 6 6"><path d="M0.5,0.5 L5.5,5.5 M5.5,0.5 L0.5,5.5" stroke="#aaa" stroke-width="0.8"/></svg>
<svg class="ic" style="left:864px;top:88px" width="11" height="11" viewBox="0 0 11 11"><path d="M1.5,4 L5,1 L9,4.5 L6,9.5 L2,7.5z" fill="none" stroke="#555" stroke-width="0.9"/><path d="M8,6 q1.5,2 0.5,3" fill="none" stroke="#555" stroke-width="0.8"/></svg>
<div class="t" style="left:853px;top:102px;color:#4a7fd0;font-size:8px">填充与线条</div>
<div class="a" style="left:851px;top:111px;width:36px;height:2px;background:#6b9be0"></div>
<svg class="ic" style="left:899px;top:88px" width="12" height="11" viewBox="0 0 12 11"><path d="M0.5,0.5 h10 v7 M0.5,0.5 v9 h6" fill="none" stroke="#555" stroke-width="0.9"/><path d="M7,9 l3,-3" stroke="#4a7fc8" stroke-width="0.9"/></svg>
<div class="t" style="left:899px;top:102px;color:#333;font-size:8px">效果</div>
<div class="a" style="left:849px;top:113px;width:129px;height:1px;background:#dedede"></div>
<svg class="ic" style="left:852px;top:126px" width="4" height="4" viewBox="0 0 4 4"><path d="M4,0 v4 h-4z" fill="#4a7fd0"/></svg>
<div class="t" style="left:859px;top:124px;color:#4a7fd0;font-size:8px">填充</div>
<div class="a" style="left:915px;top:123px;width:56px;height:11px;background:#fff;border:1px solid #e0e0e0"></div>
<div class="a" style="left:916px;top:124px;width:48px;height:9px;background:#3e5a8a"></div>
<div class="a" style="left:966px;top:128px;width:2px;height:2px;background:#888"></div>
<g></g>
<svg class="ic" style="left:857px;top:141.5px" width="10" height="190" viewBox="0 0 10 190">
<g fill="#fafafa" stroke="#b9b9b9" stroke-width="0.8">
<circle cx="5" cy="5.5" r="3.5"/><circle cx="5" cy="18.7" r="3.5"/><circle cx="5" cy="31" r="3.5"/><circle cx="5" cy="45" r="3.5"/><circle cx="5" cy="57.7" r="3.5"/>
<circle cx="5" cy="152.8" r="3.5"/><circle cx="5" cy="166" r="3.5"/><circle cx="5" cy="179" r="3.5"/>
</g>
<circle cx="5" cy="18.7" r="1.6" fill="#2f6cc4"/><circle cx="5" cy="152.8" r="1.6" fill="#2f6cc4"/>
</svg>
<div class="t" style="left:868px;top:142px;font-size:8px">无填充(N)</div>
<div class="t" style="left:868px;top:155.5px;font-size:8px">纯色填充(S)</div>
<div class="t" style="left:868px;top:168px;font-size:8px">渐变填充(G)</div>
<div class="t" style="left:868px;top:182px;font-size:8px">图片或纹理填充(P)</div>
<div class="t" style="left:868px;top:194.5px;font-size:8px">图案填充(A)</div>
<div class="t" style="left:858px;top:222.5px;font-size:8px">颜色(C)</div>
<div class="a" style="left:915px;top:222px;width:56px;height:10px;background:#fff;border:1px solid #e0e0e0"></div>
<div class="a" style="left:916.5px;top:223px;width:48px;height:8px;background:#1f3864"></div>
<div class="a" style="left:966px;top:226px;width:2px;height:2px;background:#888"></div>
<div class="t" style="left:858px;top:241px;font-size:8px">透明度(T)</div>
<div class="a" style="left:916px;top:241.5px;width:8px;height:7px;border-radius:4px;background:#fafafa;border:1px solid #d0d0d0"></div>
<div class="a" style="left:918px;top:245px;width:4px;height:1px;background:#666"></div>
<div class="a" style="left:924px;top:245px;width:40px;height:1px;background:#c8c8c8"></div>
<div class="a" style="left:924px;top:244.5px;width:7px;height:2px;background:#3a78d0"></div>
<div class="a" style="left:928px;top:243px;width:4px;height:5px;background:#3a78d0;border-radius:1px"></div>
<div class="a" style="left:964px;top:241.5px;width:8px;height:7px;border-radius:4px;background:#fafafa;border:1px solid #d0d0d0"></div>
<div class="a" style="left:966.5px;top:245px;width:3px;height:1px;background:#666"></div>
<div class="a" style="left:967.5px;top:244px;width:1px;height:3px;background:#666"></div>
<div class="t" style="left:925px;top:237px;font-size:6.5px;color:#777">17%</div>
<svg class="ic" style="left:852px;top:274px" width="4" height="4" viewBox="0 0 4 4"><path d="M4,0 v4 h-4z" fill="#4a7fd0"/></svg>
<div class="t" style="left:859px;top:272.5px;color:#4a7fd0;font-size:8px">线条</div>
<div class="a" style="left:915px;top:271px;width:56px;height:12px;background:#fff;border:1px solid #e4e4e4;border-radius:1px"></div>
<div class="t" style="left:935px;top:273px;color:#333;font-size:8px">无</div>
<div class="a" style="left:966px;top:277px;width:2px;height:2px;background:#888"></div>
<div class="t" style="left:868px;top:290px;font-size:8px">无线条(N)</div>
<div class="t" style="left:868px;top:303px;font-size:8px">实线(S)</div>
<div class="t" style="left:868px;top:316px;font-size:8px">渐变线(G)</div>
<!-- SIDEBAR -->
<div id="side" class="a"></div>
<div class="a" style="left:983px;top:144px;width:14px;height:14px;border-radius:2px;background:#c4c4c4"></div>
<svg class="ic" style="left:984px;top:70px" width="14" height="275" viewBox="0 0 14 275" fill="none" stroke="#707070" stroke-width="0.9">
<path d="M3,6.5 h8" stroke="#aaa" stroke-dasharray="1.5 1"/>
<g transform="translate(0,-1)"><path d="M2,29 h10 M3,28 l6,-6 l2,2 l-6,6z"/></g>
<g transform="translate(0,2.5)"><path d="M4,35 v9 l2,-2 h4z M4,35 l6,7"/></g>
<g transform="translate(0,1)"><circle cx="5" cy="61" r="3.5"/><circle cx="9" cy="59" r="3.5"/></g>
<g transform="translate(0,1)"><path d="M2,76 h10 M2,80 h10 M2,84 h10" stroke="#555" stroke-width="1.1"/></g>
<g transform="translate(0,1.5)"><path d="M3,96 h8 v6 h-8z M4.5,96 v-2.5 q2.5,-3 5,0 v2.5"/></g>
<path d="M3,112 h6 l2,2 v8 h-8z M5,117 h4 M5,119.5 h4"/>
<g transform="translate(0,1.5)"><path d="M7,129 l1.8,3.6 l4,0.6 l-2.9,2.8 l0.7,4 l-3.6,-1.9 l-3.6,1.9 l0.7,-4 l-2.9,-2.8 l4,-0.6z"/></g>
<g transform="translate(0,3)"><path d="M4,154 h6 v-5" stroke="#c6c6c6"/></g>
<g transform="translate(0,1)"><circle cx="7" cy="173.5" r="4.5"/><path d="M5.5,172 q1.5,-2 3,0 q0,1.5 -1.5,2 v1 M7,177 v0.5"/></g>
<g transform="translate(0,1)"><circle cx="7" cy="191" r="4.5"/><path d="M7,188.5 v2.5 l2,1.5 M2.5,189 l-1,2"/></g>
<g transform="translate(0,1)"><path d="M2.5,206 h9 v8 h-9z M2.5,209 h9"/></g>
<g transform="translate(0,3)"><path d="M2.5,225 v6 h8 v-4 M6,228 l5,-5 M8,223 h3 v3"/></g>
<g transform="translate(0,1.5)"><path d="M2.5,243 h9 v9 h-9z M4,250 l2.5,-3 l2,2 l1.5,-1.5"/></g>
<g transform="translate(0,1)"><circle cx="7" cy="266.5" r="4.5"/><path d="M5,268 l2,-3 l2,3z"/></g>
</svg>
<!-- bottom-right blank overlay -->
<div class="a" style="left:780px;top:418px;width:201px;height:109px;background:#e3e3e3"></div>
<div class="a" style="left:848px;top:422px;width:107px;height:105px;background:#e4e4e4"></div>
<div class="a" style="left:981px;top:418px;width:19px;height:109px;background:#e3e3e3"></div>
<div class="a" style="left:925px;top:420px;width:90px;height:105px;border-radius:22px;background:#e6e6e6"></div>
<svg class="ic" style="left:986px;top:362px" width="9" height="3" viewBox="0 0 9 3"><circle cx="1.5" cy="1.5" r="0.8" fill="#999"/><circle cx="4.5" cy="1.5" r="0.8" fill="#999"/><circle cx="7.5" cy="1.5" r="0.8" fill="#999"/></svg>
<!-- 86% widget -->
<div class="a" style="left:968px;top:434px;width:31px;height:31px;border-radius:16px;background:#8f959e;border:2px solid #aeb4bb"></div>
<svg class="ic" style="left:968px;top:434px" width="31" height="31" viewBox="0 0 31 31"><path d="M15.5,1.5 A14,14 0 0 1 29.5,15.5" fill="none" stroke="#9cc8c0" stroke-width="1.2"/></svg>
<div class="t" style="left:973px;top:443px;font-size:12px;line-height:13px;color:#dde1e5">86<span style="font-size:6px">%</span></div>
<!-- STATUS BAR -->
<div id="status" class="a"></div>
<div class="t" style="left:5px;top:530px;color:#555;font-size:7px">页码: 1</div>
<div class="t" style="left:32px;top:530px;color:#555;font-size:7px">页面: 1/1</div>
<div class="t" style="left:66px;top:530px;color:#555;font-size:7px">节: 1/1</div>
<div class="t" style="left:93px;top:530px;color:#555;font-size:7px">设置值: 25毫米</div>
<div class="t" style="left:144px;top:530px;color:#555;font-size:7px">行: 1</div>
<div class="t" style="left:164px;top:530px;color:#555;font-size:7px">列: 1</div>
<div class="t" style="left:187px;top:530px;color:#555;font-size:7px">字数: 0</div>
<svg class="ic" style="left:215px;top:530px" width="9" height="8" viewBox="0 0 9 8"><rect x="0.5" y="0.5" width="8" height="7" fill="none" stroke="#666" stroke-width="0.8"/><path d="M3,3 l1.5,1.5 l2,-2" fill="none" stroke="#666" stroke-width="0.8"/></svg>
<div class="t" style="left:225px;top:530px;color:#555;font-size:7px">拼写检查</div>
<svg class="ic" style="left:262px;top:530px" width="7" height="8" viewBox="0 0 7 8"><path d="M3.5,0.5 L6.5,1.5 V4.5 Q6.5,6.5 3.5,7.5 Q0.5,6.5 0.5,4.5 V1.5z" fill="none" stroke="#888" stroke-width="0.8"/></svg>
<div class="t" style="left:272px;top:530px;color:#666;font-size:7px">未认证</div>
<div class="a" style="left:792px;top:528px;width:11px;height:13px;background:#c9c9c9"></div>
<svg class="ic" style="left:752px;top:530px" width="90" height="9" viewBox="0 0 90 9" fill="none" stroke="#555" stroke-width="0.9">
<path d="M0.5,3 v-2.5 h2.5 M6,0.5 h2.5 v2.5 M8.5,6 v2.5 h-2.5 M3,8.5 h-2.5 v-2.5 M1,1 l2,2 M8,1 l-2,2"/>
<path d="M14,0.5 h8 v8 h-8z M18,0.5 v8"/>
<path d="M27,8.5 h8 M28,7 l5,-5 l1.5,1.5 l-5,5z"/>
<path d="M41.5,0.5 h6 v8 h-6z M43,3 h3 M43,5 h3" stroke="#333"/>
<path d="M55,0.5 h7 v8 h-7z M57,3 h3 M57,5 h3"/>
<circle cx="72" cy="4.5" r="4"/><path d="M68,4.5 h8 M72,0.5 v8 M70,1 q-1.5,3.5 0,7 M74,1 q1.5,3.5 0,7"/>
<path d="M81,5 q4,-4 8,0 q-4,4 -8,0z M82,1 l1,1.5 M88,1 l-1,1.5 M85,0 v1.5"/>
</svg>
<div class="t" style="left:855px;top:530px;color:#444;font-size:7.5px">100%</div>
<svg class="ic" style="left:875px;top:534px" width="3" height="2" viewBox="0 0 3 2"><path d="M0,0 h3 l-1.5,1.8z" fill="#999"/></svg>
<div class="a" style="left:883px;top:534px;width:6px;height:1.2px;background:#444"></div>
<div class="a" style="left:894px;top:534px;width:71px;height:1px;background:#c4c4c4"></div>
<div class="a" style="left:894px;top:534px;width:36px;height:1px;background:#8a8a8a"></div>
<div class="a" style="left:926px;top:530.5px;width:8px;height:8px;border-radius:4px;background:#fff;border:1px solid #555"></div>
<svg class="ic" style="left:971px;top:531px" width="7" height="7" viewBox="0 0 7 7"><path d="M3.5,0 v7 M0,3.5 h7" stroke="#444" stroke-width="1.1"/></svg>
<svg class="ic" style="left:984px;top:530px" width="8" height="8" viewBox="0 0 8 8"><path d="M0.5,2.5 v-2 h2 M5.5,0.5 h2 v2 M7.5,5.5 v2 h-2 M2.5,7.5 h-2 v-2" fill="none" stroke="#666" stroke-width="0.8"/><circle cx="4" cy="4" r="1.2" fill="#666"/></svg>
</body></html>
